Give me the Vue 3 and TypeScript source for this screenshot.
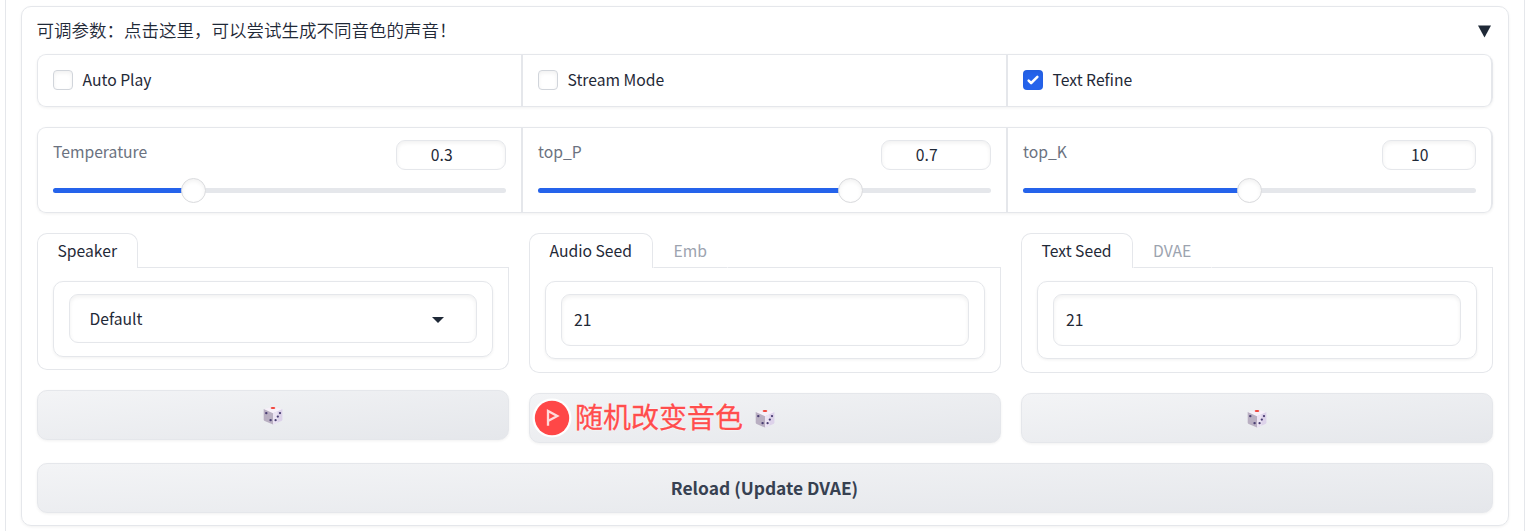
<script setup lang="ts">
interface Toggle { label: string; checked: boolean }
interface Slider { label: string; value: string; thumb: number; narrow: boolean }
interface Column { tabs: string[]; kind: 'select' | 'input'; value: string; note: string }

const toggles: Toggle[] = [
  { label: 'Auto Play', checked: false },
  { label: 'Stream Mode', checked: false },
  { label: 'Text Refine', checked: true },
]
const sliders: Slider[] = [
  { label: 'Temperature', value: '0.3', thumb: 140.5, narrow: false },
  { label: 'top_P', value: '0.7', thumb: 312.5, narrow: false },
  { label: 'top_K', value: '10', thumb: 226.5, narrow: true },
]
const columns: Column[] = [
  { tabs: ['Speaker'], kind: 'select', value: 'Default', note: '' },
  { tabs: ['Audio Seed', 'Emb'], kind: 'input', value: '21', note: '随机改变音色' },
  { tabs: ['Text Seed', 'DVAE'], kind: 'input', value: '21', note: '' },
]
</script>

<template>
  <main class="page">
    <section class="accordion">
      <header class="head">
        <span class="title">可调参数：点击这里，可以尝试生成不同音色的声音！</span>
        <svg class="arrow" width="13" height="13" viewBox="0 0 13 13"><path d="M0 .5H13L6.5 12.5Z" fill="#1f2937" /></svg>
      </header>

      <div class="group toggles">
        <label v-for="t in toggles" :key="t.label" class="cell toggle">
          <span class="check" :class="{ on: t.checked }">
            <svg v-if="t.checked" width="20" height="20" viewBox="0 0 16 16"><path d="M12.207 4.793a1 1 0 0 1 0 1.414l-5 5a1 1 0 0 1-1.414 0l-2-2a1 1 0 0 1 1.414-1.414L6.5 9.086l4.293-4.293a1 1 0 0 1 1.414 0z" fill="#fff" /></svg>
          </span>
          <span class="text">{{ t.label }}</span>
        </label>
      </div>

      <div class="group sliders">
        <div v-for="s in sliders" :key="s.label" class="cell slider">
          <div class="slider-head">
            <span class="text muted">{{ s.label }}</span>
            <span class="number text" :class="{ narrow: s.narrow }">{{ s.value }}</span>
          </div>
          <div class="track">
            <div class="fill" :style="{ width: s.thumb + 'px' }"></div>
            <div class="thumb" :style="{ left: s.thumb - 12.5 + 'px' }"></div>
          </div>
        </div>
      </div>

      <div class="columns">
        <div v-for="c in columns" :key="c.tabs[0]" class="column">
          <nav class="tabs">
            <span v-for="(tab, i) in c.tabs" :key="tab" class="tab text" :class="{ active: i === 0 }">{{ tab }}</span>
            <span class="rest"></span>
          </nav>
          <div class="panel" :class="c.kind">
            <div class="block">
              <div class="field text">
                <span>{{ c.value }}</span>
                <svg v-if="c.kind === 'select'" width="12" height="6" viewBox="0 0 12 6"><path d="M0 0H12L6 6Z" fill="#1f2937" /></svg>
              </div>
            </div>
          </div>
          <div class="button">
            <svg class="dice" width="20" height="19" viewBox="0 0 20 19">
              <path d="M1 3.2 8.8.9Q10 .6 11.2.9L19.3 3.2 10 8Z" fill="#f6f0f9" />
              <path d="M.7 3 10 7.2V18.6L1.7 15Q.7 14.5.7 13.5Z" fill="#b9afc2" />
              <path d="M10 7.2 19.4 3V13.4Q19.3 14.5 18.3 15L10 18.6Z" fill="#ddd2ea" />
              <path d="M10 7.2 14.5 5.2V16.7L10 18.6Z" fill="#ece4f3" />
              <ellipse cx="10" cy="2" rx="2.4" ry=".9" fill="#f03f35" />
              <g fill="#493d72">
                <circle cx="3.3" cy="7.1" r="1.2" /><circle cx="7.6" cy="14.1" r="1.2" />
                <circle cx="17" cy="7.1" r="1.15" /><circle cx="14.8" cy="10.6" r="1.15" /><circle cx="12.6" cy="14.2" r="1.15" />
              </g>
            </svg>
            <div v-if="c.note" class="note">
              <svg width="40" height="40" viewBox="0 0 40 40">
                <circle cx="20" cy="20" r="19.5" fill="#fff" />
                <circle cx="20" cy="20" r="17.2" fill="#ff4747" />
                <path d="M16 27.8V13L25.3 18 16 23" fill="none" stroke="#ffdada" stroke-width="2.3" />
              </svg>
              <span>{{ c.note }}</span>
            </div>
          </div>
        </div>
      </div>

      <div class="button reload"><span>Reload (Update DVAE)</span></div>
    </section>
  </main>
</template>

<style>
body { margin: 0; background: #fff; overflow: hidden; }
</style>

<style scoped>
* { box-sizing: border-box; }
.page {
  width: 1520px; height: 531px; margin-left: 5px; padding: 6px 15px 0;
  border: 1px solid #e5e7eb; border-width: 0 1px;
  font-family: "Noto Sans CJK SC", "Noto Sans", sans-serif; color: #1f2937;
}
.accordion {
  height: 520px; padding: 0 15px; border: 1px solid #e5e7eb; border-radius: 10px;
  box-shadow: 0 1px 3px rgba(0, 0, 0, .06);
}
.head { height: 47px; display: flex; justify-content: space-between; align-items: center; }
.title { margin: -2px 0 0 -.5px; font-size: 17.5px; font-weight: 350; line-height: 24px; white-space: nowrap; }
.arrow { margin: 1px 2px 0 0; }
.text { font-size: 15.7px; line-height: 22px; white-space: nowrap; }
.group {
  display: flex; width: 1456px; border: 1px solid #e5e7eb; border-right: 0; border-radius: 9px;
  overflow: hidden; box-shadow: 0 1px 3px rgba(0, 0, 0, .06);
}
.cell { width: 485px; border-right: 2px solid #e5e7eb; padding: 0 15px; }
.cell:last-child { border-radius: 0 8px 8px 0; }
.toggles { height: 53px; }
.toggle { display: flex; align-items: center; gap: 9.5px; padding-bottom: 1px; }
.check {
  width: 20px; height: 20px; border: 1px solid #d1d5db; border-radius: 4px;
  box-shadow: inset 0 2px 4px rgba(0, 0, 0, .06);
}
.check.on { border: 0; background: #2563eb; }
.check svg { display: block; }
.sliders { height: 86px; margin-top: 20px; }
.slider { padding-top: 12px; }
.slider-head { display: flex; justify-content: space-between; height: 48px; }
.muted { color: #6b7280; margin-top: 1px; }
.number {
  width: 110px; height: 30px; padding-right: 18.5px; border: 1px solid #e5e7eb; border-radius: 9px;
  line-height: 28px; text-align: center; box-shadow: inset 0 2px 4px rgba(0, 0, 0, .06);
}
.number.narrow { width: 94px; }
.track { position: relative; height: 5px; border-radius: 3px; background: #e5e7eb; }
.fill { height: 5px; border-radius: 3px 0 0 3px; background: #2563eb; }
.thumb {
  position: absolute; top: -10px; width: 25px; height: 25px; border: 1px solid #d9dadd;
  border-radius: 50%; background: #fff; box-shadow: inset 0 2px 4px rgba(0, 0, 0, .06);
}
.columns { display: flex; gap: 20px; margin-top: 20px; height: 210px; align-items: flex-start; }
.column { width: 472px; }
.tabs { display: flex; height: 35px; }
.tab {
  height: 35px; padding: 6px 20px 0 19.5px; border: 1px solid transparent; border-bottom-color: #e5e7eb; color: #9ca3af;
}
.tab.active { border-color: #e5e7eb; border-bottom: 0; border-radius: 10px 10px 0 0; color: #1f2937; }
.rest { flex: 1; border-bottom: 1px solid #e5e7eb; }
.panel { padding: 13px 15px; border: 1px solid #e5e7eb; border-top: 0; border-radius: 0 0 10px 10px; }
.panel.select { padding-bottom: 12px; }
.block {
  padding: 12px 15px; border: 1px solid #e5e7eb; border-radius: 10px;
  box-shadow: 0 1px 3px rgba(0, 0, 0, .06);
}
.select .block { padding-bottom: 13px; }
.field {
  display: flex; align-items: center; justify-content: space-between; height: 52px; padding: 0 12px;
  border: 1px solid #e5e7eb; border-radius: 9px; box-shadow: inset 0 2px 4px rgba(0, 0, 0, .06);
}
.select .field { height: 49px; padding: 0 32px 0 19.5px; }
.select .field svg { margin-top: 2px; }
.button {
  position: relative; height: 50px; margin-top: 20px; display: flex; align-items: center; justify-content: center;
  border: 1px solid #e5e7eb; border-radius: 10px; background: linear-gradient(to bottom right, #f3f4f6, #e5e7eb);
  box-shadow: 0 1px 3px rgba(0, 0, 0, .06);
}
.dice { margin: 1px 1px 0 0; }
.note {
  position: absolute; left: 2px; top: 4px; display: flex; align-items: center;
  font-size: 28px; line-height: 40px; color: #ff4d4d; white-space: nowrap;
}
.note span { margin: -5px 0 0 3px; text-shadow: 0 0 1px #fff, 0 0 2px #fff; -webkit-text-stroke: .3px #ff4d4d; }
.reload { font-size: 17.4px; font-weight: 600; color: #374151; }
.reload span { margin: -2px 1px 0 0; }
</style>
